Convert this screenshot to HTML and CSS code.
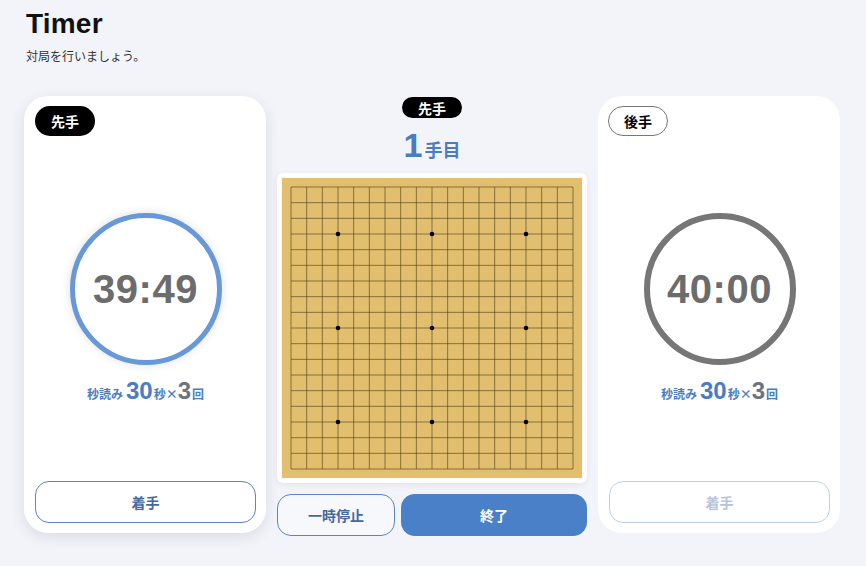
FILE: index.html
```html
<!DOCTYPE html>
<html lang="ja">
<head>
<meta charset="utf-8">
<title>Timer</title>
<link rel="stylesheet" href="styles.css">
</head>
<body>
<header class="head">
  <h1 class="title">Timer</h1>
  <p class="sub">対局を行いましょう。</p>
</header>
<main class="layout">
  <section class="card card-active">
    <span class="badge badge-black">先手</span>
    <div class="clock clock-blue"><span class="time">39:49</span></div>
    <p class="byo"><span class="s">秒読み</span><span class="big">30</span><span class="s">秒×</span><span class="big grey">3</span><span class="s">回</span></p>
    <button class="btn btn-outline">着手</button>
  </section>
  <section class="center">
    <span class="badge badge-black badge-small">先手</span>
    <p class="move"><span class="num">1</span><span class="unit">手目</span></p>
    <div class="board-frame">
      <div class="board">
        <svg class="grid" width="284" height="284" viewBox="0 0 284 284" id="grid"></svg>
      </div>
    </div>
    <div class="actions">
      <button class="btn btn-outline btn-pause">一時停止</button>
      <button class="btn btn-fill">終了</button>
    </div>
  </section>
  <section class="card">
    <span class="badge badge-white">後手</span>
    <div class="clock clock-grey"><span class="time">40:00</span></div>
    <p class="byo"><span class="s">秒読み</span><span class="big">30</span><span class="s">秒×</span><span class="big grey">3</span><span class="s">回</span></p>
    <button class="btn btn-outline btn-disabled">着手</button>
  </section>
</main>
<script src="board.js"></script>
</body>
</html>
```

FILE: board.js
```js
(function () {
  var svg = document.getElementById('grid');
  var ns = 'http://www.w3.org/2000/svg';
  var step = 282 / 18;
  var o = 1;
  for (var i = 0; i < 19; i++) {
    var p = o + i * step;
    var h = document.createElementNS(ns, 'line');
    h.setAttribute('x1', o); h.setAttribute('x2', o + 18 * step);
    h.setAttribute('y1', p); h.setAttribute('y2', p);
    svg.appendChild(h);
    var v = document.createElementNS(ns, 'line');
    v.setAttribute('y1', o); v.setAttribute('y2', o + 18 * step);
    v.setAttribute('x1', p); v.setAttribute('x2', p);
    svg.appendChild(v);
  }
  [3, 9, 15].forEach(function (a) {
    [3, 9, 15].forEach(function (b) {
      var c = document.createElementNS(ns, 'circle');
      c.setAttribute('cx', o + a * step);
      c.setAttribute('cy', o + b * step);
      c.setAttribute('r', 2.3);
      c.setAttribute('class', 'star');
      svg.appendChild(c);
    });
  });
})();
```

FILE: styles.css
```css
* { box-sizing: border-box; }
html, body { margin: 0; }
body {
  background: #f3f4f9;
  font-family: "Liberation Sans", "Noto Sans CJK JP", sans-serif;
  color: #111;
  padding: 8px 26px 0 24px;
  width: 866px;
  height: 566px;
  overflow: hidden;
}
.head { padding-left: 2px; }
.title {
  margin: 0;
  font-size: 28px;
  line-height: 32px;
  font-weight: 700;
  letter-spacing: 0.2px;
}
.sub {
  margin: 8px 0 0;
  font-size: 12px;
  line-height: 16px;
  color: #333;
  font-family: "Noto Sans CJK JP", sans-serif;
}
.layout {
  margin-top: 32px;
  display: grid;
  grid-template-columns: 242px 310px 242px;
  column-gap: 11px;
  align-items: start;
}
.card {
  background: #fff;
  border-radius: 24px;
  height: 437px;
  padding: 10px 10px 10px 11px;
  display: flex;
  flex-direction: column;
  align-items: center;
}
.card-active { box-shadow: 0 4px 14px rgba(40, 50, 90, 0.12); }
.badge {
  align-self: flex-start;
  height: 30px;
  width: 60px;
  border-radius: 15px;
  display: flex;
  align-items: center;
  justify-content: center;
  font-family: "Noto Sans CJK JP", sans-serif;
  font-weight: 700;
  font-size: 14px;
}
.badge-black { background: #000; color: #fff; }
.badge-white { background: #fff; color: #000; border: 1px solid #777; margin-left: -1px; }
.badge-small { align-self: center; height: 21px; width: 60px; font-size: 14px; }
.clock {
  margin-top: 77px;
  width: 152px;
  height: 152px;
  border-radius: 50%;
  display: flex;
  align-items: center;
  justify-content: center;
  background: #fff;
}
.clock-blue { border: 5px solid #6898d8; box-shadow: 0 0 10px rgba(0, 0, 0, 0.13); }
.clock-grey { border: 6px solid #767676; }
.time {
  font-size: 40px;
  font-weight: 700;
  color: #6c6c6c;
  letter-spacing: 0.5px;
}
.byo {
  margin: 13px 0 0;
  display: flex;
  align-items: baseline;
  color: #4a7cc4;
  font-weight: 700;
}
.byo .s { font-size: 12px; font-family: "Noto Sans CJK JP", sans-serif; }
.byo .big { font-size: 24px; line-height: 26px; margin: 0 1px 0 3px; }
.byo .big.grey { color: #6b7380; margin-left: 0; }
.btn {
  font-family: "Noto Sans CJK JP", sans-serif;
  font-weight: 700;
  font-size: 14px;
  border-radius: 14px;
  height: 42px;
  cursor: pointer;
}
.card .btn { margin-top: auto; width: 221px; align-self: flex-start; }
.btn-outline { background: #fff; border: 1.5px solid #5a84c2; color: #44699f; }
.btn-disabled { border-color: #bfd0e8; color: #b7c5da; }
.center {
  display: flex;
  flex-direction: column;
  align-items: stretch;
  padding-top: 1px;
}
.move {
  margin: 7px 0 0;
  text-align: center;
  color: #4a7cc4;
  font-weight: 700;
  height: 40px;
}
.move .num { font-size: 34px; line-height: 40px; }
.move .unit { font-size: 18px; font-family: "Noto Sans CJK JP", sans-serif; margin-left: 2px; }
.board-frame {
  margin-top: 8px;
  background: #fff;
  border-radius: 6px;
  padding: 5px;
  box-shadow: 0 2px 6px rgba(40, 50, 90, 0.08);
}
.board {
  width: 300px;
  height: 300px;
  background: #e2bf6f;
  padding: 8px;
}
.grid { display: block; }
.grid line { stroke: #4a3a1c; stroke-width: 1; opacity: 0.6; }
.grid .star { fill: #000; }
.actions {
  margin-top: 11px;
  display: flex;
  gap: 6px;
}
.btn-pause { width: 118px; background: #f6f8fc; }
.btn-fill { flex: 1; background: #4a80c8; border: none; color: #fff; }
```
